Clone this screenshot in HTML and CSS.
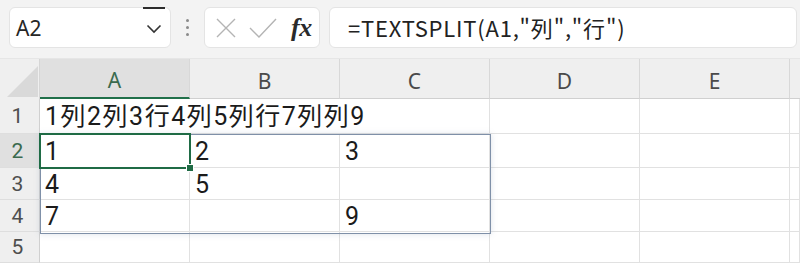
FILE: index.html
```html
<!DOCTYPE html>
<html lang="ja">
<head>
<meta charset="utf-8">
<title>TEXTSPLIT</title>
<link rel="stylesheet" href="styles.css">
</head>
<body>
<div class="toolbar">
  <div class="box namebox">
    <span class="name">A2</span>
    <svg class="chev" width="16" height="10" viewBox="0 0 16 10"><path d="M1.5 1.5 L8 8 L14.5 1.5" fill="none" stroke="#333" stroke-width="1.6"/></svg>
  </div>
  <div class="dots"><i></i><i></i><i></i></div>
  <div class="box fxbox">
    <svg width="22" height="22" viewBox="0 0 22 22"><path d="M2 2 L20 20 M20 2 L2 20" stroke="#b4b4b4" stroke-width="1.4" fill="none"/></svg>
    <svg width="28" height="22" viewBox="0 0 28 22"><path d="M1 11 L10 20 L27 2" stroke="#b4b4b4" stroke-width="1.4" fill="none"/></svg>
    <span class="fx">fx</span>
  </div>
  <div class="box formula">=TEXTSPLIT(A1,"列","行")</div>
</div>
<div class="sheet">
  <div class="corner"></div>
  <div class="colh sel">A</div>
  <div class="colh">B</div>
  <div class="colh">C</div>
  <div class="colh">D</div>
  <div class="colh">E</div>
  <div class="colh last"></div>

  <div class="rowh">1</div>
  <div class="cell span3">1列2列3行4列5列行7列列9</div>
  <div class="cell"></div>
  <div class="cell"></div>
  <div class="cell"></div>

  <div class="rowh sel">2</div>
  <div class="cell">1</div>
  <div class="cell">2</div>
  <div class="cell">3</div>
  <div class="cell"></div>
  <div class="cell"></div>
  <div class="cell"></div>

  <div class="rowh">3</div>
  <div class="cell">4</div>
  <div class="cell">5</div>
  <div class="cell"></div>
  <div class="cell"></div>
  <div class="cell"></div>
  <div class="cell"></div>

  <div class="rowh">4</div>
  <div class="cell">7</div>
  <div class="cell"></div>
  <div class="cell">9</div>
  <div class="cell"></div>
  <div class="cell"></div>
  <div class="cell"></div>

  <div class="rowh">5</div>
  <div class="cell"></div>
  <div class="cell"></div>
  <div class="cell"></div>
  <div class="cell"></div>
  <div class="cell"></div>
  <div class="cell"></div>

  <div class="spill"></div>
  <div class="active"><span class="handle"></span></div>
</div>
</body>
</html>
```

FILE: styles.css
```css
* { box-sizing: border-box; }
html, body { margin: 0; padding: 0; }
body {
  width: 800px;
  height: 263px;
  overflow: hidden;
  background: #f3f3f3;
  font-family: "Noto Sans CJK JP", "Noto Sans", sans-serif;
  color: #1b1b1b;
}
.toolbar {
  height: 58px;
  display: flex;
  align-items: flex-start;
  padding: 7px 3px 0 9px;
}
.box {
  height: 41px;
  background: #fff;
  border: 1px solid #e4e4e4;
  border-radius: 6px;
  display: flex;
  align-items: center;
}
.namebox {
  width: 162px;
  position: relative;
  padding: 0 8px 0 6px;
  justify-content: space-between;
}
.namebox::before {
  content: "";
  position: absolute;
  top: -1px;
  left: 133px;
  width: 22px;
  height: 2px;
  background: #2d2d2d;
}
.name {
  font-family: "Noto Sans", sans-serif;
  font-size: 21px;
  color: #262626;
  letter-spacing: 0.2px;
}
.chev { margin-top: 2px; }
.dots {
  width: 33px;
  height: 41px;
  display: flex;
  flex-direction: column;
  align-items: center;
  justify-content: center;
  gap: 4px;
}
.dots i {
  width: 3px;
  height: 3px;
  border-radius: 50%;
  background: #8a8a8a;
}
.fxbox {
  width: 116px;
  padding: 0 6px 0 10px;
  gap: 12px;
}
.fx {
  font-family: "Liberation Serif", "DejaVu Serif", serif;
  font-style: italic;
  font-weight: bold;
  font-size: 26px;
  color: #2a2a2a;
  margin-left: 2px;
  letter-spacing: -0.5px;
}
.formula {
  margin-left: 9px;
  flex: 1;
  padding-left: 18px;
  padding-bottom: 2px;
  font-size: 22px;
  letter-spacing: 0.8px;
  color: #222;
}
.sheet {
  position: relative;
  display: grid;
  grid-template-columns: 40px repeat(5, 150px) 1fr;
  grid-template-rows: 40px 35px 34px 32px 32px 1fr;
  height: 205px;
  background: #fff;
  border-top: 1px solid #e6e6e6;
}
.corner {
  background: #efefef;
  position: relative;
  border-right: 1px solid #d6d6d6;
}
.corner::after {
  content: "";
  position: absolute;
  right: 1px;
  bottom: 2px;
  width: 31px;
  height: 31px;
  background: #d9d9d9;
  clip-path: polygon(100% 0, 100% 100%, 0 100%);
}
.colh {
  background: #efefef;
  display: flex;
  align-items: center;
  justify-content: center;
  font-family: "Noto Sans", sans-serif;
  font-size: 21px;
  color: #4a4a4a;
  padding-top: 4px;
  border-right: 1px solid #d8d8d8;
  border-bottom: 1px solid #d0d0d0;
  background-clip: padding-box;
}
.colh.sel {
  background: #e0e0e0;
  color: #3a6a4e;
  border-bottom: 2px solid #21704a;
}
.colh.last { border-right: 0; }
.rowh {
  background: #efefef;
  display: flex;
  align-items: center;
  justify-content: center;
  font-family: Roboto, "Noto Sans", sans-serif;
  font-size: 21px;
  line-height: 24px;
  color: #4e4e4e;
  padding-right: 4px;
  border-right: 1px solid #d0d0d0;
  border-bottom: 1px solid #dedede;
}
.rowh.sel {
  background: #e0e0e0;
  color: #3a6a4e;
}
.cell {
  border-right: 1px solid #e1e1e1;
  border-bottom: 1px solid #e1e1e1;
  font-family: Roboto, "Noto Sans CJK JP", sans-serif;
  font-size: 25px;
  line-height: 26px;
  letter-spacing: 1.5px;
  padding-left: 5px;
  white-space: nowrap;
  display: flex;
  align-items: center;
  padding-top: 2px;
}
.span3 { grid-column: span 3; }
.spill {
  position: absolute;
  left: 40px;
  top: 75px;
  width: 451px;
  height: 100px;
  border: 1px solid #7f90a8;
  box-shadow: 0 0 6px rgba(120, 140, 170, 0.25);
  pointer-events: none;
}
.active {
  position: absolute;
  left: 39px;
  top: 74px;
  width: 152px;
  height: 36px;
  border: 2px solid #1f6b45;
}
.handle {
  position: absolute;
  right: -5px;
  bottom: -5px;
  width: 8px;
  height: 8px;
  background: #1f6b45;
  border: 1px solid #fff;
}
```
